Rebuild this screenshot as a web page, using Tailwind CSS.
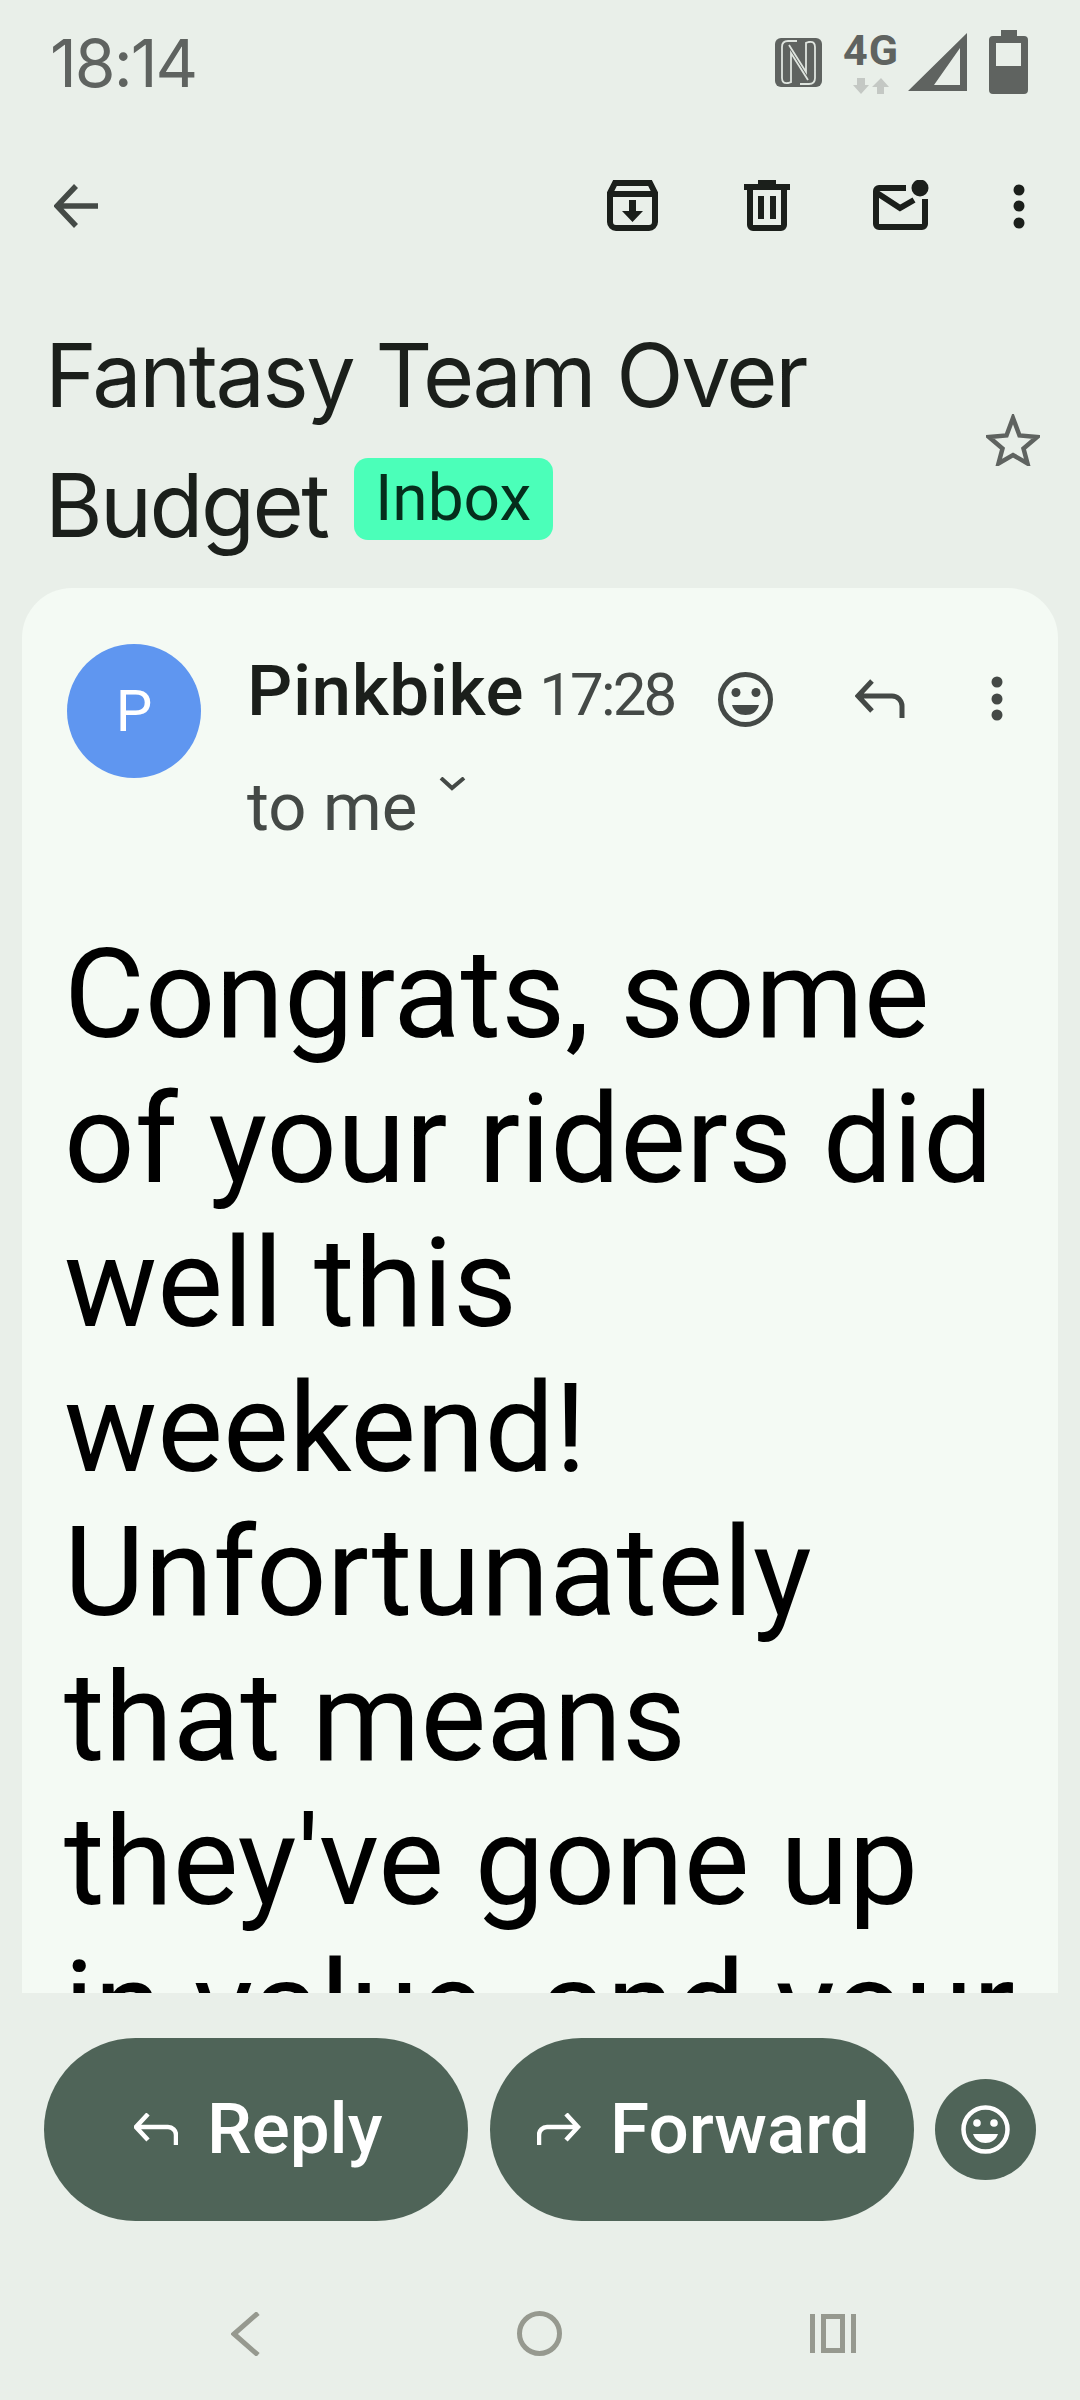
<!DOCTYPE html>
<html lang="en">
<head>
    <meta charset="UTF-8">
    <meta name="viewport" content="width=device-width, initial-scale=1.0">
    <title>Fantasy Team Over Budget</title>
    <script src="https://cdn.jsdelivr.net/npm/@tailwindcss/browser@4"></script>
</head>
<body class="bg-[#e9efe9]">
<div class="w-[1080px] h-[2400px] flex flex-col overflow-hidden font-[Roboto,sans-serif]">

    <!-- status bar -->
    <div class="h-[126px] shrink-0 flex items-center justify-between pl-[50px] pr-[40px]">
        <span class="text-[66px] leading-none text-[#5f6360] font-[Inter,sans-serif] font-normal tracking-[-2px]">18:14</span>
        <svg class="w-[270px] h-[70px]" viewBox="770 28 270 70" fill="#5f6360">
            <rect x="775" y="38" width="47" height="49" rx="6"/>
            <g fill="none" stroke="#dfe5df" stroke-width="1.800">
                <path d="M797 41h-9q-6 0-6 6v31q0 6 6 5l3-1V53l17 27"/>
                <path d="M800 84h9q6 0 6-6V47q0-6-6-5l-3 1v29L789 45"/>
            </g>
            <text x="843" y="65" font-family="Roboto, sans-serif" font-weight="700" font-size="43" textLength="55">4G</text>
            <path fill="#c4c8c4" d="M857 78h8v7h4l-8 9-8-9h4zM877 94v-7h-5l9-9 8 9h-5v7z"/>
            <path fill-rule="evenodd" d="M967 33v58h-59zM960 48l-26 37h26z"/>
            <path fill-rule="evenodd" d="M1001 30h16v6h7a4 4 0 0 1 4 4v50a4 4 0 0 1-4 4h-31a4 4 0 0 1-4-4V40a4 4 0 0 1 4-4h8zM996 43v23h25V43z"/>
        </svg>
    </div>

    <!-- toolbar -->
    <div class="h-[160px] shrink-0 flex items-center pl-[54px] text-[#1b1f1b]">
        <svg class="w-[44px] h-[44px] text-[#444a46]" viewBox="54 185 44 44" fill="none" stroke="currentColor" stroke-width="5.5">
            <path d="M98 207H58M76 187 57 207l19 20"/>
        </svg>
        <svg class="w-[52px] h-[52px] ml-[509px]" viewBox="607 180 52 52" fill="none" stroke="currentColor" stroke-width="6">
            <path d="M610 193v29a6 6 0 0 0 6 6h33a6 6 0 0 0 6-6v-29l-5-10h-35zM610 194h45"/>
            <path fill="currentColor" stroke="none" d="M629 200h7v11h7l-10.500 11-10.500-11h7z"/>
        </svg>
        <svg class="w-[46px] h-[52px] ml-[85px]" viewBox="744 180 46 52" fill="none" stroke="currentColor" stroke-width="6">
            <path d="M750 188v37a3 3 0 0 0 3 3h28a3 3 0 0 0 3-3v-37"/>
            <path fill="currentColor" stroke="none" d="M758 180h18v4h14v6h-46v-6h14zM758 196h6v23h-6zM770 196h6v23h-6z"/>
        </svg>
        <svg class="w-[56px] h-[52px] ml-[83px]" viewBox="873 178 56 52" fill="none" stroke="currentColor" stroke-width="6">
            <path d="M906 186h-27a3 3 0 0 0-3 3v33a3 3 0 0 0 3 3h43a3 3 0 0 0 3-3v-25M877 191l23 15 14-8"/>
            <circle cx="920" cy="186" r="8.500" fill="currentColor" stroke="none"/>
        </svg>
        <svg class="w-[12px] h-[46px] ml-[84px]" viewBox="1012 183 12 46" fill="currentColor">
            <circle cx="1018" cy="190" r="5.500"/><circle cx="1018" cy="206" r="5.500"/><circle cx="1018" cy="223" r="5.500"/>
        </svg>
    </div>

    <!-- subject -->
    <div class="h-[302px] shrink-0 flex items-center pl-[45px] pr-[40px] justify-between pt-[6px]">
        <div class="text-[88px] leading-[130px] text-[#1b1f1b] font-[Inter,sans-serif] font-normal tracking-[-2.500px]">
            <div>Fantasy Team Over</div>
            <div class="flex items-start">
                <span>Budget</span>
                <span class="ml-[26px] mt-[18px] w-[199px] h-[82px] rounded-[14px] bg-[#4bffb9] text-[#052e1c] text-[64px] leading-[82px] text-center tracking-normal font-[Roboto,sans-serif]">Inbox</span>
            </div>
        </div>
        <svg class="w-[54px] h-[52px]" viewBox="986 415 54 52" fill="none" stroke="#5f6360" stroke-width="4.500">
            <path d="m1013 419 6.500 17.500 17.500 1.500-13.500 11.500 4 15-14.500-8.500-14.500 8.500 4-15L989 438l17.500-1.500z"/>
        </svg>
    </div>

    <!-- message card -->
    <div class="ml-[22px] w-[1036px] h-[1405px] shrink-0 rounded-t-[50px] bg-[#f4faf4] overflow-hidden">
        <div class="flex pt-[56px] pl-[45px]">
            <div class="w-[134px] h-[134px] shrink-0 rounded-full bg-[#5f96f0] flex items-center justify-center text-white text-[58px]">P</div>
            <div class="ml-[46px] flex-1">
                <div class="flex items-center h-[100px] pr-[55px]">
                    <span class="text-[71px] font-medium text-[#1b1f1b] tracking-[0.6px] mb-[6px]">Pinkbike</span>
                    <span class="ml-[15px] mt-[2px] text-[60px] text-[#444946] tracking-[-2.800px]">17:28</span>
                    <svg class="w-[56px] h-[56px] ml-[42px] mt-[10px]" viewBox="716 672 56 56" fill="none" stroke="#444946" stroke-width="5">
                        <circle cx="744.500" cy="700.500" r="25"/>
                        <g fill="#444946" stroke="none"><circle cx="735" cy="693.500" r="4.500"/><circle cx="755" cy="693.500" r="4.500"/><path d="M731 706h27c-2 7-7 10-13.500 10S733 713 731 706z"/></g>
                    </svg>
                    <svg class="w-[50px] h-[40px] ml-[82px] mt-[10px]" viewBox="855 681 50 40" fill="none" stroke="#444946" stroke-width="5">
                        <path d="M872 683l-14 15 14 15M858 698h34a10 10 0 0 1 10 10v12"/>
                    </svg>
                    <svg class="w-[12px] h-[46px] ml-auto mt-[10px]" viewBox="990 678 12 46" fill="#444946">
                        <circle cx="996" cy="684" r="5.500"/><circle cx="996" cy="701" r="5.500"/><circle cx="996" cy="717" r="5.500"/>
                    </svg>
                </div>
                <div class="flex items-start mt-[18px] text-[#444946]">
                    <span class="text-[67px] leading-[90px]">to me</span>
                    <svg class="w-[28px] h-[14px] ml-[22px] mt-[15px]" viewBox="441 780 28 14" fill="none" stroke="#444946" stroke-width="4">
                        <path d="m443 781 11 10 12-10"/>
                    </svg>
                </div>
            </div>
        </div>
        <div class="mt-[71px] pl-[42px] w-[1002px] text-[124px] leading-[144.500px] text-black">
            Congrats, some of your riders did well this weekend! Unfortunately that means they've gone up in value, and your
        </div>
    </div>

    <!-- action buttons -->
    <div class="flex items-center pl-[44px] pt-[45px] shrink-0">
        <button class="w-[424px] h-[183px] rounded-full bg-[#4f6458] text-white flex items-center pl-[90px]">
            <svg class="w-[44px] h-[33px]" viewBox="134 2113 44 33" fill="none" stroke="currentColor" stroke-width="4.500">
                <path d="M148 2114l-12 13 12 13M136 2127h32a8 8 0 0 1 8 8v10"/>
            </svg>
            <span class="ml-[29px] text-[71px] font-medium">Reply</span>
        </button>
        <button class="ml-[22px] w-[424px] h-[183px] rounded-full bg-[#4f6458] text-white flex items-center pl-[47px]">
            <svg class="w-[44px] h-[33px]" viewBox="537 2113 44 33" fill="none" stroke="currentColor" stroke-width="4.500">
                <path d="M566 2114l12 13-12 13M578 2127h-31a8 8 0 0 0-8 8v10"/>
            </svg>
            <span class="ml-[29px] text-[71px] font-medium">Forward</span>
        </button>
        <div class="ml-[21px] w-[101px] h-[101px] rounded-full bg-[#4f6458] flex items-center justify-center text-white">
            <svg class="w-[49px] h-[49px]" viewBox="0 0 49 49" fill="none" stroke="currentColor" stroke-width="4.500">
                <circle cx="24.500" cy="24.500" r="22"/>
                <g fill="currentColor" stroke="none"><circle cx="16" cy="18" r="3.800"/><circle cx="33" cy="18" r="3.800"/><path d="M12 29h25c-2 6-7 9-12.500 9S14 35 12 29z"/></g>
            </svg>
        </div>
    </div>

    <!-- navigation bar -->
    <div class="flex items-center pl-[231px] pt-[90px] shrink-0">
        <svg class="w-[30px] h-[44px]" viewBox="231 2312 30 44" fill="none" stroke="#96998f" stroke-width="5">
            <path d="M258 2313l-24 21 24 21"/>
        </svg>
        <div class="ml-[256px] w-[45px] h-[45px] rounded-full border-[5px] border-[#96998f]"></div>
        <svg class="ml-[248px] w-[46px] h-[40px]" viewBox="809 2314 46 40" fill="#96998f">
            <path fill-rule="evenodd" d="M809 2314h5v39h-5zM850 2314h5v39h-5zM820 2314h24v39h-24zM825 2319v29h14v-29z"/>
        </svg>
    </div>
</div>
</body>
</html>
